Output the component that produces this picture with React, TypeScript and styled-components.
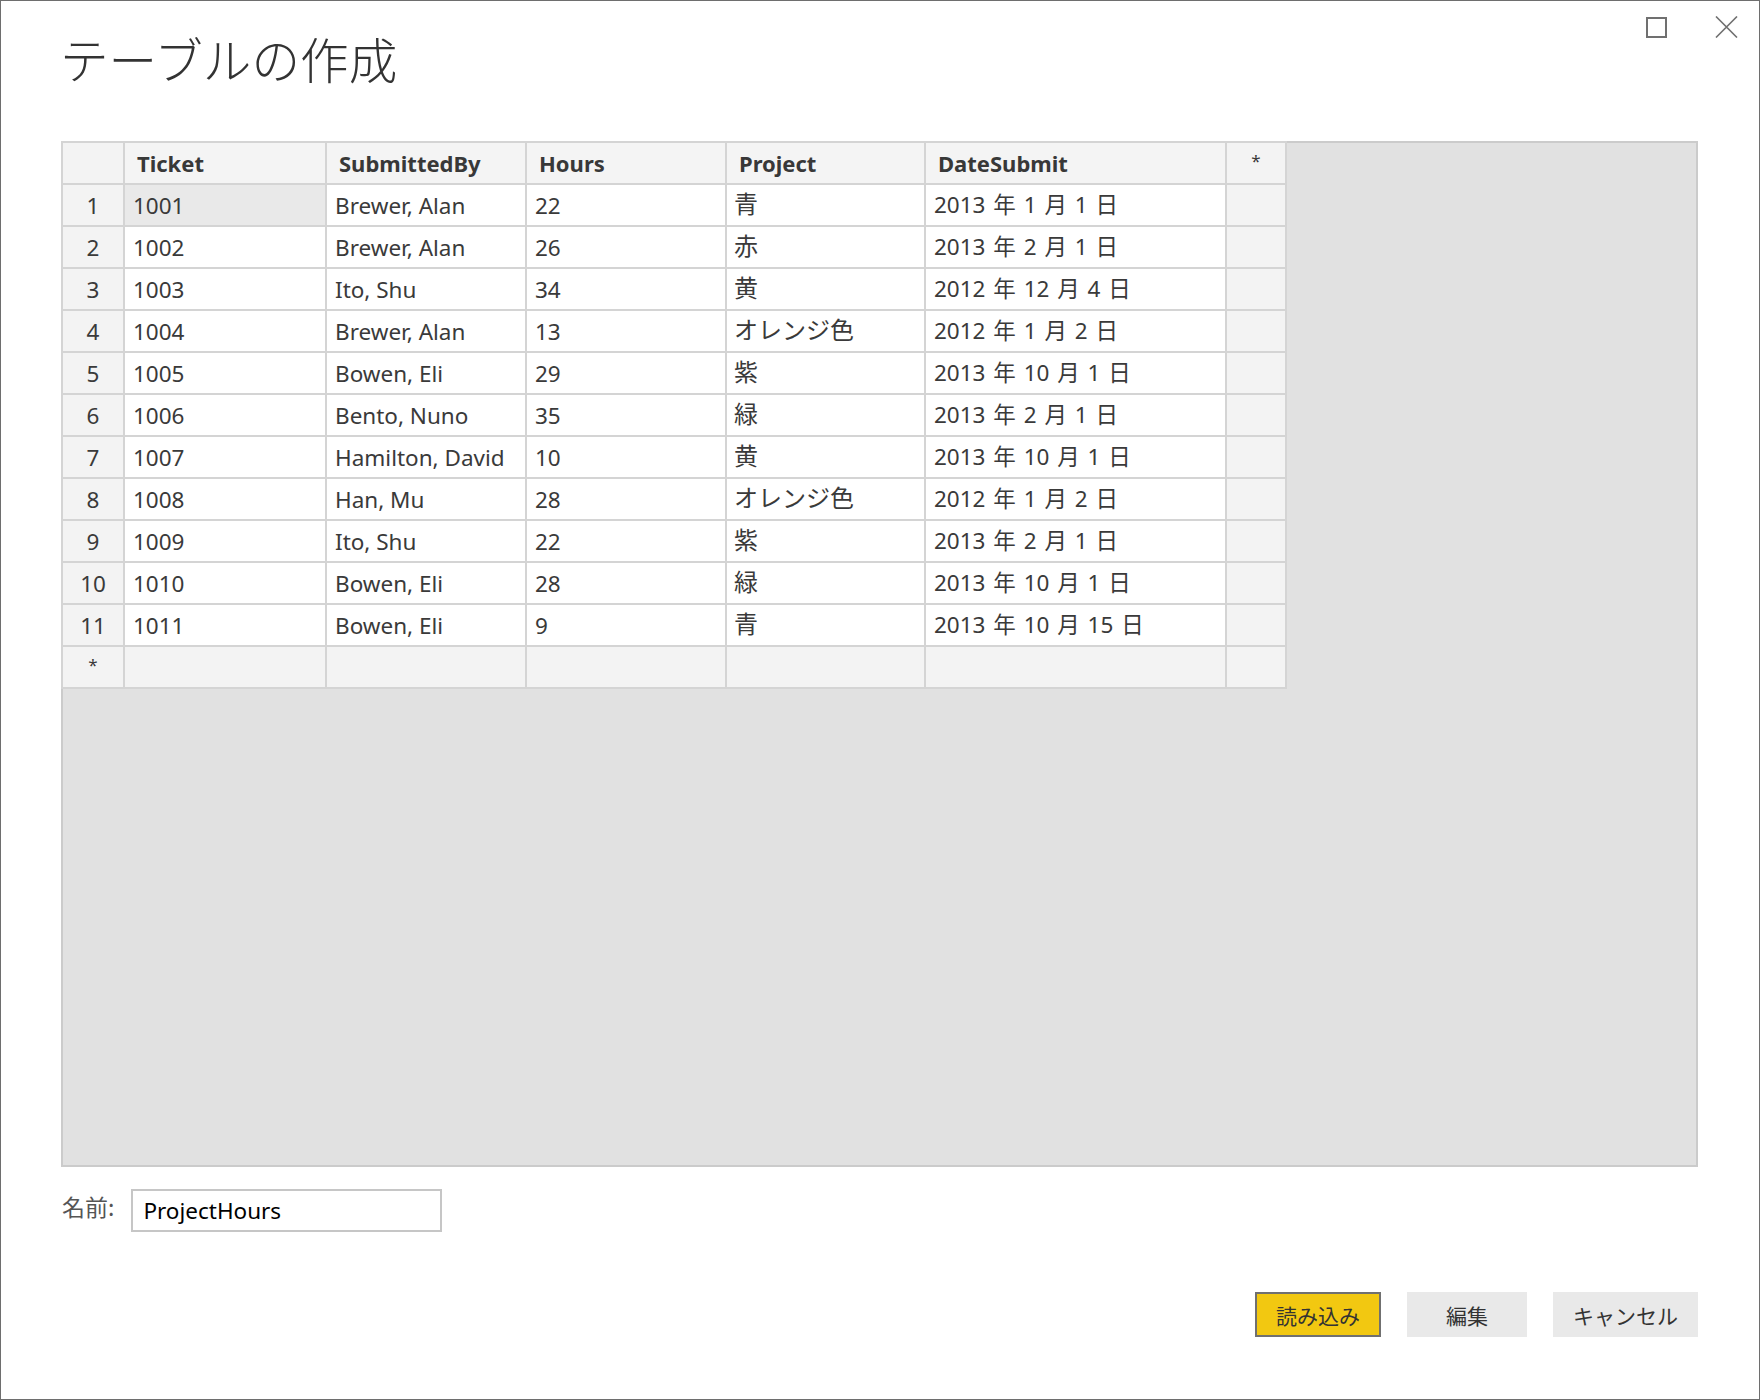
import React from 'react';
import styled, { createGlobalStyle } from 'styled-components';

const GlobalStyle = createGlobalStyle`
  html, body {
    margin: 0;
    padding: 0;
    background: #ffffff;
  }
  body {
    font-family: "Noto Sans", "Noto Sans CJK JP", sans-serif;
    color: #333333;
  }
`;

// Dialog frame
const Window = styled.div`
  box-sizing: border-box;
  width: 1760px;
  height: 1400px;
  border: 1px solid #6e6e6e;
  display: flex;
  flex-direction: column;
`;

const Header = styled.div`
  height: 140px;
  display: flex;
  justify-content: space-between;
  align-items: flex-start;
  padding: 0 21px 0 59px;
`;

const Title = styled.h1`
  margin: 33px 0 0 0;
  font-family: "Noto Sans CJK JP", sans-serif;
  font-size: 48.6px;
  line-height: 1;
  font-weight: 300;
  color: #333333;
`;

const Controls = styled.div`
  display: flex;
  align-items: flex-start;
  gap: 47px;
  margin-top: 15px;
`;

const Body = styled.div`
  flex: 1;
  display: flex;
  flex-direction: column;
  padding: 0 61px 0 60px;
`;

// Table preview
const GridArea = styled.div`
  box-sizing: border-box;
  height: 1026px;
  background: #e1e1e1;
  border: 2px solid #cbcbcb;
`;

const Grid = styled.div`
  display: grid;
  grid-template-columns: 60px 200px 198px 198px 197px 299px 58px;
  grid-auto-rows: 40px;
  gap: 2px;
  padding: 2px;
  width: max-content;
  margin: -2px 0 0 -2px;
  background: #d4d4d4;
`;

const HeadCell = styled.div`
  display: flex;
  align-items: center;
  padding-left: 12px;
  background: #f4f4f4;
  font-size: 22px;
  font-weight: 700;
  color: #383838;
`;

const SideCell = styled.div<{ $mark?: boolean }>`
  display: flex;
  align-items: center;
  justify-content: center;
  background: #f3f3f3;
  font-size: ${(p) => (p.$mark ? '17px' : '22.5px')};
  padding-bottom: ${(p) => (p.$mark ? '6px' : '0')};
  color: #3a3a3a;
`;

type Kind = 'text' | 'jp' | 'date';

const DataCell = styled.div<{ $selected?: boolean; $blank?: boolean; $kind?: Kind }>`
  display: flex;
  align-items: center;
  padding-left: ${(p) => (p.$kind === 'jp' ? '7px' : '8px')};
  padding-bottom: ${(p) => (p.$kind === 'jp' ? '6px' : p.$kind === 'date' ? '3px' : '0')};
  background: ${(p) => (p.$selected ? '#e9e9e9' : p.$blank ? '#f3f3f3' : '#ffffff')};
  font-size: ${(p) => (p.$kind === 'jp' ? '24px' : '22.5px')};
  word-spacing: ${(p) => (p.$kind === 'date' ? '2px' : '0')};
  color: #3a3a3a;
  white-space: nowrap;
`;

// Name field
const NameRow = styled.div`
  display: flex;
  align-items: flex-start;
  gap: 17px;
  margin-top: 22px;
`;

const NameLabel = styled.label`
  margin: 4px 0 0 1px;
  font-family: "Noto Sans CJK JP", sans-serif;
  font-size: 23px;
  line-height: 1.2;
  color: #555555;
`;

const NameInput = styled.input`
  box-sizing: border-box;
  width: 311px;
  height: 43px;
  border: 2px solid #c6c6c6;
  padding: 0 10px;
  font-family: "Noto Sans", sans-serif;
  font-size: 22.5px;
  color: #000000;
  outline: none;
`;

// Buttons
const ButtonRow = styled.div`
  display: flex;
  justify-content: flex-end;
  gap: 26px;
  margin-top: 60px;
`;

const Button = styled.button<{ $primary?: boolean }>`
  box-sizing: border-box;
  min-width: 120px;
  height: 45px;
  padding: 0 ${(p) => (p.$primary ? '19px' : '20px')};
  border: ${(p) => (p.$primary ? '2px solid #707070' : 'none')};
  background: ${(p) => (p.$primary ? '#f2c811' : '#e9e9e9')};
  font-family: "Noto Sans CJK JP", sans-serif;
  font-size: 21px;
  color: #333333;
  cursor: pointer;
`;

const columns = ['Ticket', 'SubmittedBy', 'Hours', 'Project', 'DateSubmit'];

const rows: [string, string, string, string, string][] = [
  ['1001', 'Brewer, Alan', '22', '青', '2013 年 1 月 1 日'],
  ['1002', 'Brewer, Alan', '26', '赤', '2013 年 2 月 1 日'],
  ['1003', 'Ito, Shu', '34', '黄', '2012 年 12 月 4 日'],
  ['1004', 'Brewer, Alan', '13', 'オレンジ色', '2012 年 1 月 2 日'],
  ['1005', 'Bowen, Eli', '29', '紫', '2013 年 10 月 1 日'],
  ['1006', 'Bento, Nuno', '35', '緑', '2013 年 2 月 1 日'],
  ['1007', 'Hamilton, David', '10', '黄', '2013 年 10 月 1 日'],
  ['1008', 'Han, Mu', '28', 'オレンジ色', '2012 年 1 月 2 日'],
  ['1009', 'Ito, Shu', '22', '紫', '2013 年 2 月 1 日'],
  ['1010', 'Bowen, Eli', '28', '緑', '2013 年 10 月 1 日'],
  ['1011', 'Bowen, Eli', '9', '青', '2013 年 10 月 15 日'],
];

const MaximizeIcon = () => (
  <svg width="22" height="22" viewBox="0 0 22 22" style={{ marginTop: 1 }}>
    <rect x="1" y="1" width="19" height="19" fill="none" stroke="#707070" strokeWidth="2" />
  </svg>
);

const CloseIcon = () => (
  <svg width="23" height="22" viewBox="0 0 23 22">
    <path d="M1 0.5 L22 21.5 M22 0.5 L1 21.5" stroke="#707070" strokeWidth="1.6" fill="none" />
  </svg>
);

const App = () => {
  return (
    <>
      <GlobalStyle />
      <Window>
        <Header>
          <Title>テーブルの作成</Title>
          <Controls>
            <MaximizeIcon />
            <CloseIcon />
          </Controls>
        </Header>
        <Body>
          <GridArea>
            <Grid>
              <SideCell />
              {columns.map((c) => (
                <HeadCell key={c}>{c}</HeadCell>
              ))}
              <SideCell $mark>*</SideCell>

              {rows.map((r, i) => (
                <React.Fragment key={r[0]}>
                  <SideCell>{i + 1}</SideCell>
                  <DataCell $selected={i === 0}>{r[0]}</DataCell>
                  <DataCell>{r[1]}</DataCell>
                  <DataCell>{r[2]}</DataCell>
                  <DataCell $kind="jp">{r[3]}</DataCell>
                  <DataCell $kind="date">{r[4]}</DataCell>
                  <DataCell $blank />
                </React.Fragment>
              ))}

              <SideCell $mark>*</SideCell>
              <DataCell $blank />
              <DataCell $blank />
              <DataCell $blank />
              <DataCell $blank />
              <DataCell $blank />
              <DataCell $blank />
            </Grid>
          </GridArea>

          <NameRow>
            <NameLabel htmlFor="table-name">名前:</NameLabel>
            <NameInput id="table-name" defaultValue="ProjectHours" />
          </NameRow>

          <ButtonRow>
            <Button $primary>読み込み</Button>
            <Button>編集</Button>
            <Button>キャンセル</Button>
          </ButtonRow>
        </Body>
      </Window>
    </>
  );
};

export default App;
